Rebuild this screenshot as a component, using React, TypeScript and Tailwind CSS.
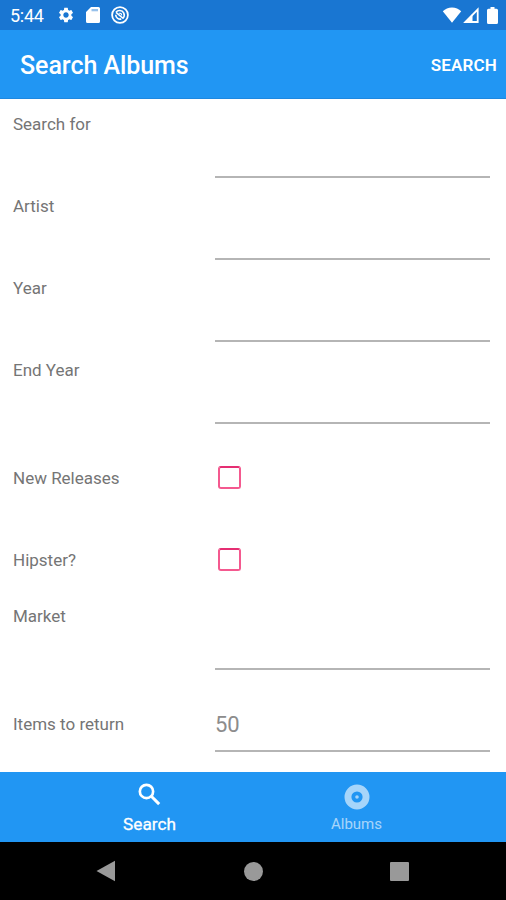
import { useState } from 'react'
import { MdSettings } from 'react-icons/md'

type Tab = 'search' | 'albums'

interface Field {
  id: string
  label: string
  kind: 'text' | 'check'
  centered?: boolean
}

const FIELDS: Field[] = [
  { id: 'query', label: 'Search for', kind: 'text' },
  { id: 'artist', label: 'Artist', kind: 'text' },
  { id: 'year', label: 'Year', kind: 'text' },
  { id: 'endYear', label: 'End Year', kind: 'text' },
  { id: 'newReleases', label: 'New Releases', kind: 'check', centered: true },
  { id: 'hipster', label: 'Hipster?', kind: 'check', centered: true },
  { id: 'market', label: 'Market', kind: 'text' },
  { id: 'limit', label: 'Items to return', kind: 'text', centered: true },
]

function StatusBar() {
  return (
    <div className="flex h-[30px] shrink-0 items-center bg-[#1976d2] pr-[8px] pl-[10px] text-white">
      <span className="w-[47px] pt-[2px] text-[18px] leading-none tracking-[-0.3px]">5:44</span>
      <MdSettings className="mr-[11px] size-[18px]" />
      <svg viewBox="0 0 14 16" className="mr-[11px] h-4 w-[14px]" fill="currentColor">
        <path d="M5 0H12.5A1.5 1.5 0 0 1 14 1.5V14.5A1.5 1.5 0 0 1 12.5 16H1.5A1.5 1.5 0 0 1 0 14.5V5z" />
        <path d="M5.5 2H12v2.3H5.500z" fill="#1976d2" opacity="0.45" />
      </svg>
      <svg viewBox="0 0 18 18" className="size-[18px]" fill="none" stroke="currentColor">
        <circle cx="9" cy="9" r="7.9" strokeWidth="1.8" />
        <path d="M5 6.300C6.800 3.800 11.200 3.800 12.700 6.900S12.300 12 11.800 12.500M4.700 8.800C4.800 12 7.800 13.700 10.300 13M5 6.300 12.300 12.500" strokeWidth="1.600" />
        <path d="M8 7.300Q10.300 6.800 10.700 9.300" strokeWidth="1.100" />
      </svg>
      <svg viewBox="0 0 20 16" className="ml-auto h-4 w-5" fill="currentColor">
        <path d="M10 15.7.8 4.300C3.200 1.800 6.400.5 10 .5s6.800 1.300 9.200 3.800z" />
      </svg>
      <svg viewBox="0 0 17 16" className="ml-px h-4 w-[17px]" fill="none" stroke="currentColor">
        <path d="M2.300 15H14.700V2.500z" strokeWidth="1.800" />
        <path d="M1 15.500 9.500 7v8.500z" fill="currentColor" stroke="none" />
      </svg>
      <svg viewBox="0 0 11 17" className="ml-[7px] h-[17px] w-[11px]" fill="currentColor">
        <path d="M3.500 0h4v1.700H9.500A1.500 1.500 0 0 1 11 3.200V15.500A1.500 1.500 0 0 1 9.500 17H1.500A1.500 1.500 0 0 1 0 15.500V3.200A1.500 1.500 0 0 1 1.500 1.700H3.500z" />
      </svg>
    </div>
  )
}

function Checkbox({ id, checked, onChange }: { id: string; checked: boolean; onChange: () => void }) {
  return (
    <input
      id={id}
      type="checkbox"
      checked={checked}
      onChange={onChange}
      className="ml-[3px] size-[23px] appearance-none rounded-[3px] border-2 border-[#f4598f] border-t-[#e52e72] checked:bg-[#f4598f]"
    />
  )
}

export default function App() {
  const [values, setValues] = useState<Record<string, string>>({ limit: '50' })
  const [checks, setChecks] = useState<Record<string, boolean>>({})
  const [tab, setTab] = useState<Tab>('search')

  return (
    <div className="flex h-[900px] w-[506px] flex-col overflow-hidden bg-white font-['Roboto',sans-serif]">
      <StatusBar />

      <header className="flex h-[69px] shrink-0 items-center justify-between border-b border-[#1e88e0] bg-[#2196f3] pt-[2px] pr-[9px] pl-5 text-white">
        <h1 className="text-[25px] leading-none font-medium tracking-[-0.05px]">Search Albums</h1>
        <button className="text-[17px] leading-none font-semibold tracking-[0.15px]">SEARCH</button>
      </header>

      <main className="flex-1">
        {FIELDS.map((f) => (
          <div key={f.id} className="flex h-[82px] pr-4 pl-[13px]">
            <label
              htmlFor={f.id}
              className={`w-[202px] text-[17px] leading-5 text-[#757575] ${f.centered ? 'pt-[41px]' : 'pt-[15px]'}`}
            >
              {f.label}
            </label>
            {f.kind === 'check' ? (
              <div className="pt-[39px]">
                <Checkbox
                  id={f.id}
                  checked={!!checks[f.id]}
                  onChange={() => setChecks({ ...checks, [f.id]: !checks[f.id] })}
                />
              </div>
            ) : (
              <input
                id={f.id}
                value={values[f.id] ?? ''}
                onChange={(e) => setValues({ ...values, [f.id]: e.target.value })}
                className="mt-[25px] h-[54px] min-w-0 flex-1 border-b-2 border-[#b5b5b5] text-[22px] text-[#8c8c8c] outline-none"
              />
            )}
          </div>
        ))}
      </main>

      {/* Bottom tabs */}
      <nav className="flex h-[70px] shrink-0 justify-center bg-[#2196f3]">
        <button
          onClick={() => setTab('search')}
          className={`flex w-[207px] flex-col items-center pt-[8px] text-[17.2px] leading-5 text-white ${tab === 'search' ? '' : 'opacity-60'}`}
        >
          <svg viewBox="0 0 24 24" className="size-[29px]" fill="none" stroke="currentColor" strokeWidth="2.2">
            <circle cx="9.5" cy="9.5" r="5.5" />
            <path d="M13.700 13.700 20 20" strokeWidth="2.500" />
          </svg>
          <span className="mt-[5px] [-webkit-text-stroke:0.3px_white]">Search</span>
        </button>
        <button
          onClick={() => setTab('albums')}
          className={`flex w-[207px] flex-col items-center pt-[12px] text-[15px] leading-5 text-white ${tab === 'albums' ? '' : 'opacity-60'}`}
        >
          <svg viewBox="0 0 26 26" className="size-[26px]" fill="currentColor" fillRule="evenodd">
            <path d="M13 .5a12.500 12.500 0 1 0 0 25a12.500 12.500 0 1 0 0-25zM13 7.400a5.600 5.600 0 1 1 0 11.200a5.600 5.600 0 1 1 0-11.200zM13 11.200a1.800 1.800 0 1 0 0 3.600a1.800 1.800 0 1 0 0-3.600z" />
          </svg>
          <span className="mt-[4px]">Albums</span>
        </button>
      </nav>

      {/* System navigation */}
      <div className="flex h-[58px] shrink-0 items-center justify-between bg-black pr-[97px] pl-[96px] text-[#999]">
        <svg viewBox="0 0 20 22" className="h-[22px] w-5" fill="currentColor">
          <path d="M.5 11 19 .8v20.400z" />
        </svg>
        <span className="size-[19px] rounded-full bg-[#999]" />
        <span className="size-[19px] rounded-[1px] bg-[#999]" />
      </div>
    </div>
  )
}
